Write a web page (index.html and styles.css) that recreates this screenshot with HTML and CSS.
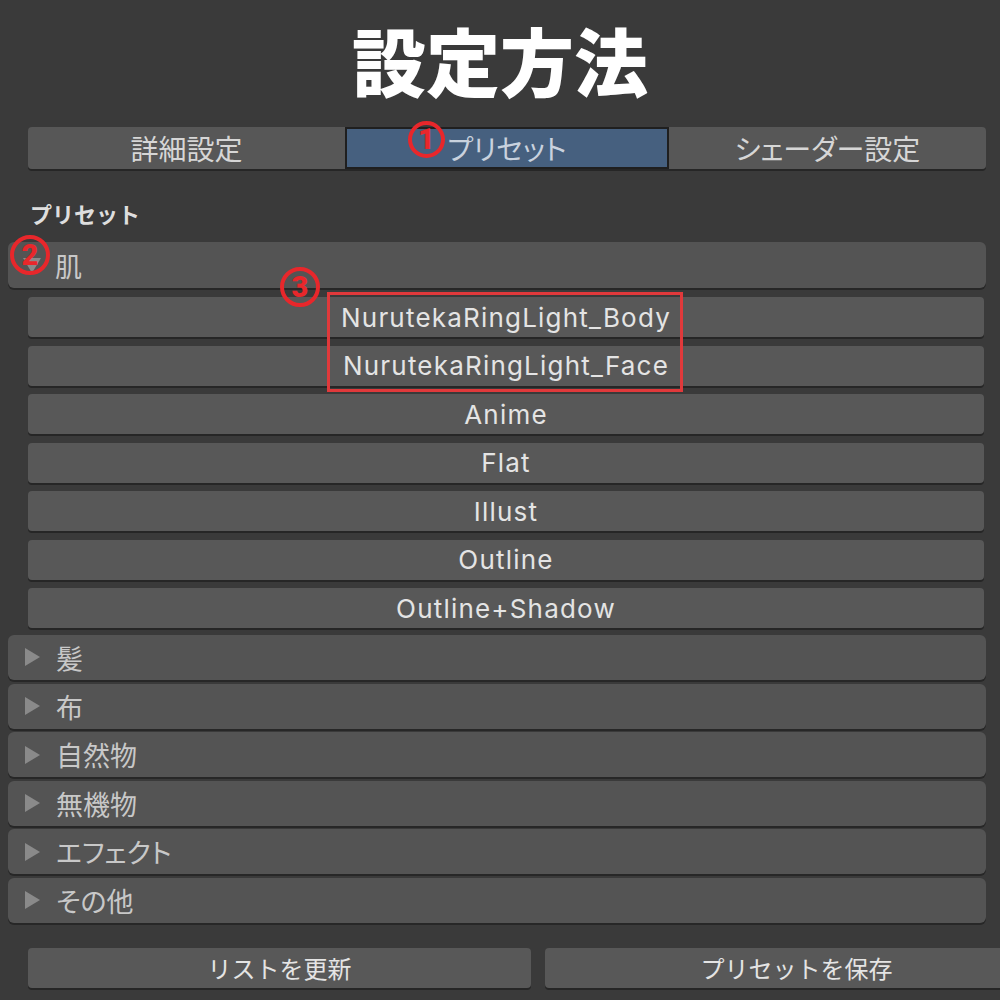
FILE: index.html
```html
<!DOCTYPE html>
<html lang="ja">
<head>
<meta charset="utf-8">
<title>設定方法</title>
<link rel="stylesheet" href="styles.css">
</head>
<body>
<div class="page">
  <h1 class="title">設定方法</h1>

  <div class="tabs">
    <div class="tab">詳細設定</div>
    <div class="tab active">プリセット</div>
    <div class="tab">シェーダー設定</div>
  </div>

  <div class="section-label">プリセット</div>

  <div class="foldouts">
    <div class="group">
      <div class="foldout"><span class="arrow down"></span><span class="fold-text">肌</span></div>
      <div class="presets">
        <div class="btn">NurutekaRingLight_Body</div>
        <div class="btn">NurutekaRingLight_Face</div>
        <div class="btn">Anime</div>
        <div class="btn">Flat</div>
        <div class="btn">Illust</div>
        <div class="btn">Outline</div>
        <div class="btn">Outline+Shadow</div>
      </div>
    </div>
    <div class="foldout"><span class="arrow"></span><span class="fold-text">髪</span></div>
    <div class="foldout"><span class="arrow"></span><span class="fold-text">布</span></div>
    <div class="foldout"><span class="arrow"></span><span class="fold-text">自然物</span></div>
    <div class="foldout"><span class="arrow"></span><span class="fold-text">無機物</span></div>
    <div class="foldout"><span class="arrow"></span><span class="fold-text">エフェクト</span></div>
    <div class="foldout"><span class="arrow"></span><span class="fold-text">その他</span></div>
  </div>

  <div class="actions">
    <div class="btn action">リストを更新</div>
    <div class="btn action">プリセットを保存</div>
  </div>

  <div class="highlight"></div>
  <span class="mark mark-1">1</span>
  <span class="mark mark-2">2</span>
  <span class="mark mark-3">3</span>
</div>
</body>
</html>
```

FILE: styles.css
```css
html, body {
  margin: 0;
  padding: 0;
  background: #3a3a3a;
  overflow: hidden;
}

.page {
  position: relative;
  width: 1000px;
  height: 1000px;
  overflow: hidden;
  font-family: Inter, "Noto Sans CJK JP", sans-serif;
  color: #e2e2e2;
}

.title {
  margin: 0;
  padding-top: 22px;
  height: 78px;
  line-height: 74px;
  font-size: 74px;
  font-weight: 900;
  text-align: center;
  color: #ffffff;
  font-family: "Noto Sans CJK JP", sans-serif;
}

.tabs {
  display: flex;
  margin: 27px 0 0 28px;
  width: 958px;
  height: 42px;
  box-shadow: 0 2px 0 #262626;
  border-radius: 4px;
}

.tab {
  flex: 1;
  display: flex;
  align-items: center;
  justify-content: center;
  background: #575757;
  font-family: "Noto Sans CJK JP", sans-serif;
  font-feature-settings: "palt";
  font-size: 28px;
  color: #d6d6d6;
  box-sizing: border-box;
}

.tab:first-child {
  border-radius: 4px 0 0 4px;
}

.tab:last-child {
  border-radius: 0 4px 4px 0;
}

.tab.active {
  flex: 0 0 324px;
  background: #46607f;
  border: 2px solid #1f1f1f;
  color: #c9d2de;
}

.section-label {
  margin: 29px 0 0 30px;
  height: 30px;
  line-height: 30px;
  font-family: "Noto Sans CJK JP", sans-serif;
  font-size: 22px;
  font-weight: 700;
  color: #dedede;
}

.foldouts {
  margin: 14px 0 0 8px;
  width: 978px;
  display: flex;
  flex-direction: column;
  gap: 3.6px;
}

.foldout {
  height: 45px;
  display: flex;
  align-items: center;
  background: #545454;
  border-radius: 6px;
  box-shadow: 0 2px 0 #272727;
  font-family: "Noto Sans CJK JP", sans-serif;
  font-feature-settings: "palt";
  font-size: 27px;
  color: #c8c8c8;
}

.group > .foldout {
  height: 46px;
}

.arrow {
  width: 0;
  height: 0;
  margin: 0 16px 0 17px;
  border-top: 9px solid transparent;
  border-bottom: 9px solid transparent;
  border-left: 15px solid #8a8a8a;
}

.arrow.down {
  border-left: 9px solid transparent;
  border-right: 9px solid transparent;
  border-top: 15px solid #8a8a8a;
  border-bottom: 0;
  margin: 0 14px 0 15px;
}

.fold-text {
  line-height: 1;
}

.presets {
  display: flex;
  flex-direction: column;
  gap: 8.5px;
  padding: 9px 2px 3.4px 20px;
}

.btn {
  height: 40px;
  display: flex;
  align-items: center;
  justify-content: center;
  background: #585858;
  border-radius: 4px;
  box-shadow: 0 2px 0 #262626;
  font-size: 26px;
  letter-spacing: 1.2px;
  color: #e4e4e4;
}

.actions {
  display: flex;
  gap: 14px;
  margin: 25px 0 0 28px;
}

.btn.action {
  flex: 0 0 503px;
  font-family: "Noto Sans CJK JP", sans-serif;
  font-size: 24px;
  letter-spacing: 0;
}

.highlight {
  position: absolute;
  left: 327px;
  top: 292px;
  width: 350px;
  height: 94px;
  border: 3px solid #e0393b;
}

.mark {
  position: absolute;
  box-sizing: border-box;
  width: 40px;
  height: 40px;
  border: 4px solid #e8272b;
  border-radius: 50%;
  display: flex;
  align-items: center;
  justify-content: center;
  font-family: Roboto, sans-serif;
  font-weight: 900;
  font-size: 29px;
  line-height: 1;
  color: #e8272b;
}

.mark-1 {
  left: 408px;
  top: 121px;
  width: 37px;
  height: 37px;
}

.mark-2 {
  left: 10px;
  top: 235px;
}

.mark-3 {
  left: 280px;
  top: 267px;
}
```
